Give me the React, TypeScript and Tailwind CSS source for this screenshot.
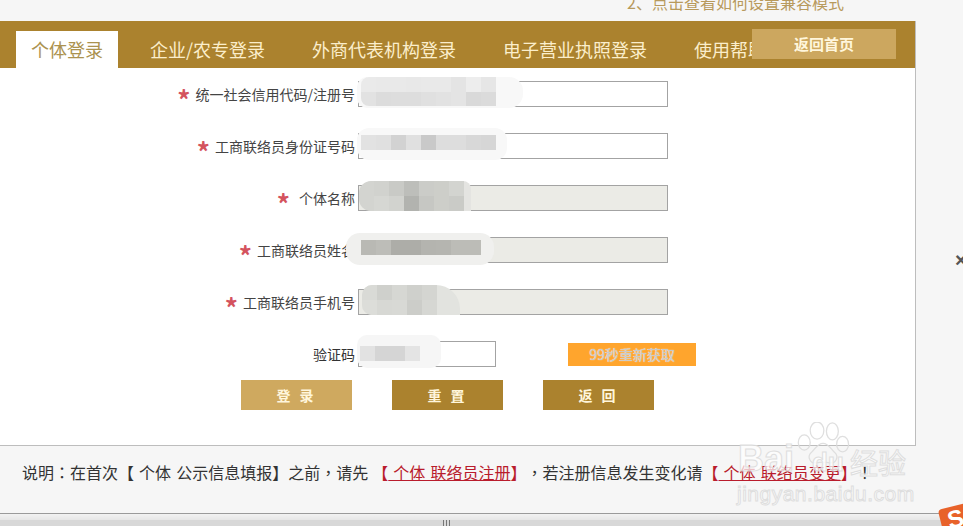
const FONT = "font-['Noto_Sans_CJK_SC','Liberation_Sans',sans-serif]";
// centred full-width punctuation, as the page's font draws it
const PUNCT = "font-['Noto_Sans_CJK_TC',sans-serif]";

const TABS = ["企业/农专登录", "外商代表机构登录", "电子营业执照登录", "使用帮助"];

// blurred-out patches painted over the form values
function Mosaic({ blob, grid, rows }: { blob: string; grid: string; rows: string[][] }) {
  return (
    <>
      <div className={`absolute ${blob}`} />
      <div className={`absolute flex flex-col overflow-hidden ${grid}`}>
        {rows.map((row, i) => (
          <div key={i} className="flex flex-1">
            {row.map((c, j) => (
              <div key={j} className={`w-[15px] ${c}`} />
            ))}
          </div>
        ))}
      </div>
    </>
  );
}

function Field({
  label,
  disabled,
  wide,
  children,
}: {
  label: string;
  disabled?: boolean;
  wide?: boolean;
  children?: React.ReactNode;
}) {
  return (
    <div className="flex h-[26px] items-center mb-[26px]">
      <div className="w-[355px] flex justify-end items-center text-[14px] text-[#444] leading-none">
        <span className={`text-[26px] font-bold text-[#d4535e] mt-[9px] ${wide ? "mr-[9px]" : "mr-[5px]"}`}>*</span>
        <span>{label}</span>
      </div>
      <div
        className={`relative ml-[3px] w-[310px] h-[26px] border border-[#a3a3a3] ${
          disabled ? "bg-[#ebebe6]" : "bg-white"
        }`}
      >
        {children}
      </div>
    </div>
  );
}

export default function App() {
  return (
    <div className={`relative w-[963px] h-[526px] overflow-hidden bg-[#f6f6f6] ${FONT}`}>
      <div className="h-[21px] overflow-hidden">
        <p className="pl-[627px] -mt-[8px] text-[16px] leading-[20px] text-[#b89a5c] [text-spacing-trim:space-all]">
          2、点击查看如何设置兼容模式
        </p>
      </div>

      {/* Main panel */}
      <div className="relative w-[916px] h-[425px] bg-white border-r border-b border-[#bdbdbd]">
        <div className="relative flex items-end h-[47px] bg-[#ab822e] pl-[16px] gap-[17px]">
          <div className="h-[37px] px-[15px] bg-white text-[18px] leading-[36px] text-[#ab924f]">个体登录</div>
          {TABS.map((t) => (
            <div key={t} className="h-[37px] px-[15px] text-[18px] leading-[36px] text-[#fbeecb] whitespace-nowrap">
              {t}
            </div>
          ))}
          <button className="absolute left-[752px] top-[8px] w-[144px] h-[30px] bg-[#cca75f] text-[15px] font-bold text-[#fff6dc]">
            返回首页
          </button>
        </div>

        <div className="pt-[13px]">
          <Field label="统一社会信用代码/注册号">
            <Mosaic
              blob="-left-[2px] -top-[5px] w-[166px] h-[31px] rounded-l-[10px] rounded-r-[14px] bg-[#f8f8f8]"
              grid="left-[2px] -top-[5px] h-[29px] rounded-l-[8px]"
              rows={[
                ["bg-[#eaeaea]", "bg-[#e9e9e9]", "bg-[#e9e9e9]", "bg-[#e8e8e8]", "bg-[#e9e9e9]", "bg-[#e9e9e9]", "bg-[#e4e4e4]", "bg-[#ededed]", "bg-[#e6e6e6]"],
                ["bg-[#e2e2e2]", "bg-[#dcdcdc]", "bg-[#dddddd]", "bg-[#dddddd]", "bg-[#e0e0e0]", "bg-[#e2e2e2]", "bg-[#e4e4e4]", "bg-[#d9d9d9]", "bg-[#dbdbdb]"],
              ]}
            />
          </Field>
          <Field label="工商联络员身份证号码">
            <Mosaic
              blob="-left-[2px] -top-[6px] w-[150px] h-[32px] rounded-[12px] bg-[#f8f8f8]"
              grid="left-[2px] top-[1px] h-[15px]"
              rows={[
                ["bg-[#e2e2e2]", "bg-[#e0e0e0]", "bg-[#d2d2d2]", "bg-[#e0e0e0]", "bg-[#c9c9c9]", "bg-[#dddddd]", "bg-[#dddddd]", "bg-[#d8d8d8]", "bg-[#d6d6d6]"],
              ]}
            />
          </Field>
          <Field label="个体名称" wide disabled>
            <Mosaic
              blob="left-0 -top-[5px] w-[112px] h-[30px] rounded-tl-[14px] rounded-tr-[8px] rounded-bl-[14px] bg-[#e4e4e1]"
              grid="left-0 -top-[5px] h-[30px] rounded-tl-[12px] rounded-bl-[12px]"
              rows={[
                ["bg-[#d3d4d0]", "bg-[#d1d2ce]", "bg-[#c9cac6]", "bg-[#bdbeba]", "bg-[#cbccc8]", "bg-[#cdcec9]", "bg-[#d3d4d0]"],
                ["bg-[#d3d4d0]", "bg-[#d6d7d3]", "bg-[#d2d3cf]", "bg-[#b2b3af]", "bg-[#c6c7c3]", "bg-[#cdcec9]", "bg-[#cacbc7]"],
              ]}
            />
          </Field>
          <Field label="工商联络员姓名" disabled>
            <Mosaic
              blob="-left-[13px] -top-[5px] w-[148px] h-[32px] rounded-[14px] bg-[#f0f0ee]"
              grid="left-[2px] top-[2px] h-[15px]"
              rows={[
                ["bg-[#b9b9b4]", "bg-[#bdbdb8]", "bg-[#adada8]", "bg-[#adada8]", "bg-[#b4b4af]", "bg-[#b5b5b0]", "bg-[#bcbcb7]", "bg-[#bcbcb7]"],
              ]}
            />
          </Field>
          <Field label="工商联络员手机号" disabled>
            <Mosaic
              blob="left-[3px] -top-[5px] w-[98px] h-[30px] rounded-tr-[24px] rounded-l-[10px] bg-[#e2e3df]"
              grid="left-[3px] -top-[5px] h-[30px] rounded-l-[10px]"
              rows={[
                ["bg-[#d9dad6]", "bg-[#cfd0cc]", "bg-[#d6d7d3]", "bg-[#cfd0cc]", "bg-[#d4d5d1]"],
                ["bg-[#dcddd9]", "bg-[#d7d8d4]", "bg-[#d8d9d5]", "bg-[#cccdc9]", "bg-[#d6d7d3]"],
              ]}
            />
          </Field>

          <div className="flex h-[26px] items-center">
            <div className="w-[355px] text-right text-[14px] text-[#333] leading-none">验证码</div>
            <div className="relative ml-[3px] w-[138px] h-[26px] border border-[#a3a3a3] bg-white">
              <Mosaic
                blob="-left-[2px] -top-[7px] w-[84px] h-[33px] rounded-[10px] bg-[#f6f6f6]"
                grid="left-[1px] top-[4px] h-[15px]"
                rows={[["bg-[#e2e2e2]", "bg-[#d5d5d5]", "bg-[#d5d5d5]", "bg-[#e4e4e4]"]]}
              />
            </div>
            <button className="ml-[72px] w-[128px] h-[23px] bg-[#ffa52d] text-[14px] leading-none text-[#c9c9c9] [text-shadow:0_0_1px_#fff]">
              99秒重新获取
            </button>
          </div>

          <div className="flex gap-[40px] pl-[241px] mt-[13px]">
            <button className="w-[111px] h-[30px] bg-[#cfa95f] text-[14px] font-bold text-[#fff6dc] tracking-[3px]">登 录</button>
            <button className="w-[111px] h-[30px] bg-[#ab822e] text-[14px] font-bold text-[#fff6dc] tracking-[3px]">重 置</button>
            <button className="w-[111px] h-[30px] bg-[#ab822e] text-[14px] font-bold text-[#fff6dc] tracking-[3px]">返 回</button>
          </div>
        </div>
      </div>

      {/* Note */}
      <p className="h-[67px] pl-[22px] pt-[14px] text-[16px] leading-[24px] text-[#333] whitespace-nowrap [text-spacing-trim:space-all] [word-spacing:1.5px]">
        说明<span className={PUNCT}>：</span>在首次【 个体 公示信息填报】之前<span className={PUNCT}>，</span>请先
        <span className="ml-[4px] text-[#b91c2c]">
          【<span className="underline"> 个体 联络员注册</span>】
        </span>
        <span className={PUNCT}>，</span>若注册信息发生变化请
        <span className="text-[#b91c2c]">
          【<span className="underline"> 个体 联络员变更</span>】
        </span>
        <span className={PUNCT}>！</span>
      </p>

      {/* Scrollbar */}
      <div className="flex justify-center h-[13px] border-t border-[#9a9a9a] bg-[#d8d8d8] pr-[70px]">
        <div className="absolute left-0 right-0 h-[6px] bg-gradient-to-b from-[#f2f2f2] to-[#e6e6e6]" />
        <div className="flex gap-[2px] pt-[6px] h-[13px]">
          <span className="w-px h-[7px] bg-[#777]" />
          <span className="w-px h-[7px] bg-[#777]" />
          <span className="w-px h-[7px] bg-[#777]" />
        </div>
      </div>

      {/* Close mark at the window edge */}
      <span className="absolute left-[955px] top-[249px] text-[20px] font-bold leading-[22px] text-[#555] font-['Liberation_Sans',sans-serif]">×</span>

      {/* Baidu jingyan watermark */}
      <div className="absolute left-[738px] top-[420px] w-[175px] h-[88px] text-white/80 opacity-90 [-webkit-text-stroke:1px_#dcdcdc] font-['Liberation_Sans',sans-serif]">
        <svg className="absolute left-[58px] top-[2px] w-[54px] h-[46px]" viewBox="0 0 62 54" fill="none" stroke="#dcdcdc" strokeWidth="1.5">
          <ellipse cx="9" cy="24" rx="7" ry="9" />
          <ellipse cx="24" cy="10" rx="8" ry="10" />
          <ellipse cx="42" cy="11" rx="7" ry="10" />
          <ellipse cx="54" cy="26" rx="7" ry="9" />
          <path d="M31 25c-7 0-9 7-14 11-5 5-1 13 6 12 5-1 11-1 16 0 7 1 11-7 6-12-5-4-7-11-14-11z" />
        </svg>
        <span className="absolute left-0 top-[20px] text-[36px] font-bold leading-[38px]">Bai</span>
        <span className="absolute left-[74px] top-[27px] text-[26px] font-bold leading-[30px]">du</span>
        <span className="absolute left-[112px] top-[26px] text-[28px] leading-[32px] font-['Noto_Sans_CJK_SC',sans-serif]">经验</span>
        <span className="absolute left-[-1px] top-[61px] text-[21px] leading-[26px] tracking-[0.5px] whitespace-nowrap">jingyan.baidu.com</span>
      </div>

      {/* Sogou IME badge */}
      <div className="absolute left-[941px] top-[506px] w-[30px] h-[30px] rounded-[4px] bg-[#e8622a] rotate-[-14deg] text-center text-[24px] leading-[26px] font-bold text-white font-['Liberation_Sans',sans-serif]">
        S
      </div>
    </div>
  );
}
